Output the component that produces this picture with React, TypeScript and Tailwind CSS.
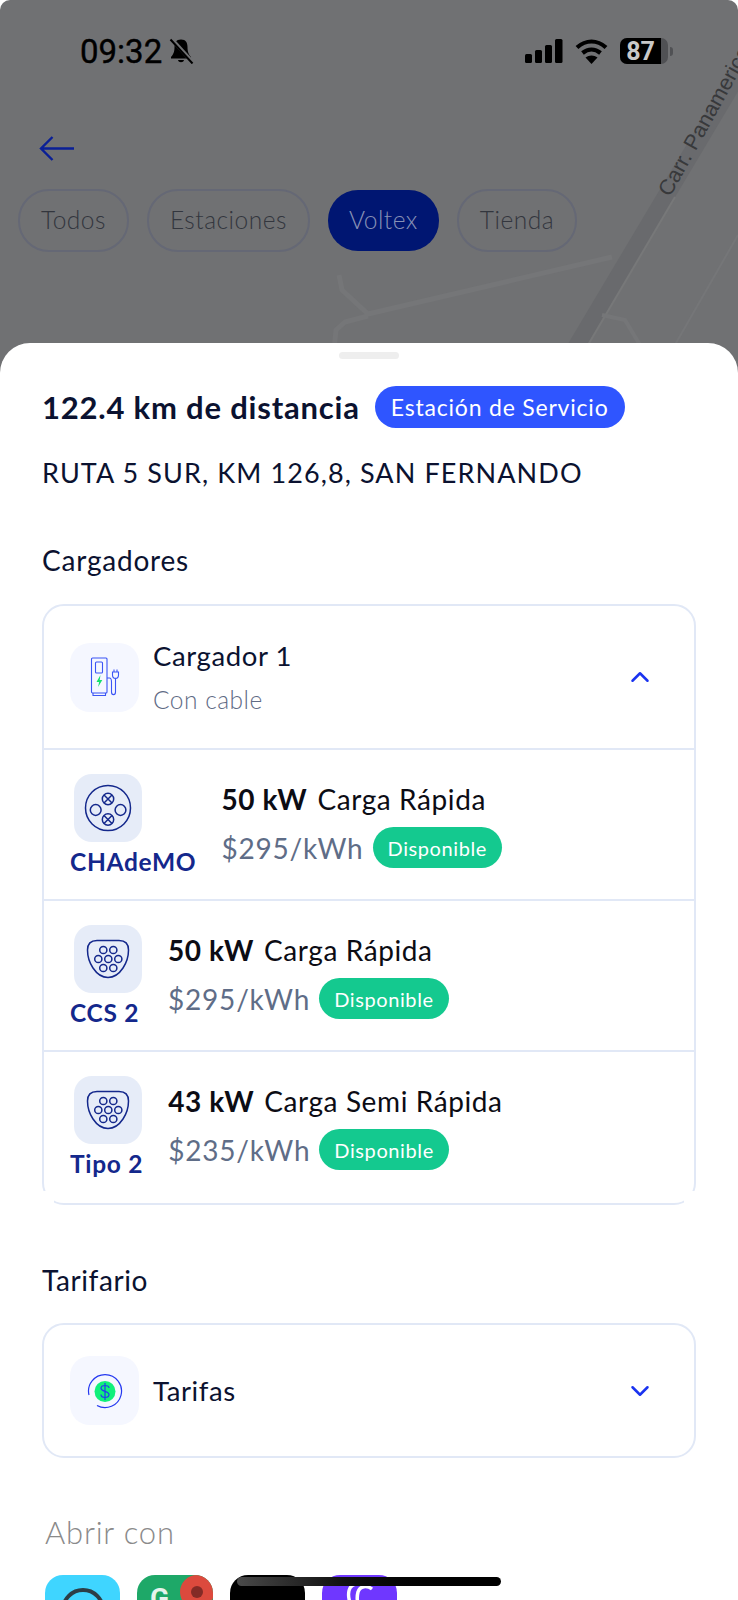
import React from "react";
import { ChevronDown, ChevronUp } from "lucide-react";

const font = "font-['Lato',_'Noto_Sans',_sans-serif]";

const filters = ["Todos", "Estaciones", "Voltex", "Tienda"];

type Plug = "chademo" | "type2";

const chargers: {
  plug: Plug;
  name: string;
  power: string;
  speed: string;
  price: string;
}[] = [
  { plug: "chademo", name: "CHAdeMO", power: "50 kW", speed: "Carga Rápida", price: "$295/kWh" },
  { plug: "type2", name: "CCS 2", power: "50 kW", speed: "Carga Rápida", price: "$295/kWh" },
  { plug: "type2", name: "Tipo 2", power: "43 kW", speed: "Carga Semi Rápida", price: "$235/kWh" },
];

const MapRoads = () => (
  <svg className="absolute left-0 top-0" width="738" height="360" viewBox="0 0 738 360" fill="none">
    <path d="M745 63 L570 357" stroke="#696a6d" strokeWidth="17" />
    <path d="M675 197 L588 345" stroke="#777879" strokeWidth="2" />
    <path d="M738 235 L672 350" stroke="#757678" strokeWidth="2" />
    <path
      d="M612 257 L368 314 L342 290 L339 275 M368 316 L345 322 L336 330 L334 350"
      stroke="#757678"
      strokeWidth="5"
      strokeLinejoin="round"
    />
    <path d="M602 315 L625 320 L640 345" stroke="#757678" strokeWidth="4" />
  </svg>
);

const StatusBar = () => (
  <div className="flex h-[50px] items-center justify-between pl-[80px] pr-[65px]">
    <div className="flex items-center gap-[6px]">
      <span className="font-['Roboto',_sans-serif] text-[33px] leading-none text-black [-webkit-text-stroke:0.4px_#000]">
        09:32
      </span>
      <svg width="26" height="26" viewBox="0 0 26 26" fill="none">
        <path d="M13 1.5 C8 1.5 6.5 5 6.5 9 C6.5 14 5.5 16 3 19 V20.5 H23 V19 C20.5 16 19.5 14 19.5 9 C19.5 5 18 1.5 13 1.5 Z" fill="#000" />
        <path d="M10 22 C10.5 25 15.5 25 16 22 Z" fill="#000" />
        <path d="M3 0.5 L25 24.5" stroke="#707173" strokeWidth="4" />
        <path d="M2.5 1.5 L24.5 25.5" stroke="#000" strokeWidth="2" />
      </svg>
    </div>
    <div className="flex items-center gap-[12px]">
      <svg width="38" height="24" viewBox="0 0 38 24">
        <rect x="0" y="15" width="7" height="9" rx="1.5" fill="#000" />
        <rect x="10" y="11" width="7" height="13" rx="1.5" fill="#000" />
        <rect x="20" y="6" width="7" height="18" rx="1.5" fill="#000" />
        <rect x="30" y="0" width="7.5" height="24" rx="1.5" fill="#000" />
      </svg>
      <svg width="33" height="25" viewBox="0 0 33 25" fill="none">
        <path d="M2 8.5 C11 0.5 22 0.5 31 8.5" stroke="#000" strokeWidth="4.2" />
        <path d="M7.5 14 C13 9.5 20 9.5 25.5 14" stroke="#000" strokeWidth="4.2" />
        <path d="M16.5 25 L10.5 18.5 C14 15.8 19 15.8 22.5 18.5 Z" fill="#000" />
      </svg>
      <div className="flex items-center gap-[2px]">
        <div className="relative flex h-[26px] w-[48px] items-center overflow-hidden rounded-[7px] bg-[#505154]">
          <div className="flex h-full w-[41px] items-center justify-center bg-black font-['Roboto',_sans-serif] text-[25px] font-bold leading-none text-[#c9c9c9]">
            87
          </div>
        </div>
        <div className="h-[9px] w-[3px] rounded-r-full bg-[#505154]" />
      </div>
    </div>
  </div>
);

const FilterChips = () => (
  <div className="mt-[28px] flex items-center gap-[18px] pl-[18px]">
    {filters.map((f) =>
      f === "Voltex" ? (
        <div
          key={f}
          className="flex h-[61px] items-center rounded-[30px] bg-[#001672] px-[21px] text-[24.5px] font-light tracking-[0.5px] text-[#8791b6]"
        >
          {f}
        </div>
      ) : (
        <div
          key={f}
          className="flex h-[63px] items-center rounded-[31px] border-2 border-[#656875] px-[21px] text-[24.5px] font-light tracking-[0.5px] text-[#33363e]"
        >
          {f}
        </div>
      ),
    )}
  </div>
);

const ChargerIcon = () => (
  <svg width="32" height="40" viewBox="-1.5 0 32 40" fill="none" stroke="#3b55f5" strokeWidth="1.1">
    <rect x="1" y="1" width="15.5" height="35" rx="1" />
    <path d="M2.5 36 V38.5 H15 V36" />
    <rect x="5" y="5" width="7" height="11" rx="1" />
    <path d="M16.5 21 H19 C21 21 21 23 21 25 V35 C21 38.5 25 38.5 25 35 V22" />
    <path d="M22 15 H28 V18 C28 22.5 22 22.5 22 18 Z M23.5 15 V12.5 M26.5 15 V12.5" />
    <path d="M10 18 L6 25 H8.6 L7.6 30 L11.8 23 H9.2 Z" fill="#16e06d" stroke="none" />
  </svg>
);

const TarifaIcon = () => (
  <svg width="36" height="36" viewBox="0 0 36 36" fill="none">
    <circle cx="18" cy="18.5" r="10.5" fill="#10f07a" />
    <path d="M2 22 A16.5 16.5 0 1 1 10 32.5" stroke="#2438f0" strokeWidth="1.2" />
    <path
      d="M22 15 C22 13 20 12.5 18 12.5 C15.5 12.5 14 13.6 14 15.3 C14 19 22 17.8 22 21.6 C22 23.5 20.5 24.5 18 24.5 C15.5 24.5 14 23.5 14 21.6 M18 10 V27"
      stroke="#2438f0"
      strokeWidth="1.2"
    />
  </svg>
);

const PlugIcon = ({ plug }: { plug: Plug }) => {
  if (plug === "chademo") {
    return (
      <svg width="48" height="48" viewBox="0 0 48 48" fill="none" stroke="#14288c" strokeWidth="1.5">
        <circle cx="24" cy="24" r="22.5" />
        <circle cx="24" cy="15" r="5.7" />
        <path d="M20 11 L28 19 M28 11 L20 19" />
        <circle cx="24" cy="35.5" r="5.7" />
        <path d="M20 31.5 L28 39.5 M28 31.5 L20 39.5" />
        <circle cx="11.7" cy="26" r="5.4" />
        <circle cx="36.5" cy="26" r="5.4" />
      </svg>
    );
  }
  const pins = [
    [17.3, 11],
    [27.3, 11],
    [12.3, 20],
    [22.3, 20],
    [32.3, 20],
    [17.3, 29],
    [27.3, 29],
  ];
  return (
    <svg width="44" height="40" viewBox="0 0 44 40" fill="none" stroke="#14288c" strokeWidth="1.5">
      <path d="M11 1.5 H33 C39 1.5 42.5 5 42.5 11 C42.5 17 41 23 37 29 C33 35 28 38.5 22 38.5 C16 38.5 11 35 7 29 C3 23 1.5 17 1.5 11 C1.5 5 5 1.5 11 1.5 Z" />
      {pins.map(([cx, cy]) => (
        <circle key={`${cx}-${cy}`} cx={cx} cy={cy} r="3.6" />
      ))}
    </svg>
  );
};

const IconBox = ({ children }: { children: React.ReactNode }) => (
  <div className="flex h-[69px] w-[69px] shrink-0 items-center justify-center rounded-[20px] bg-[#f5f7ff]">
    {children}
  </div>
);

const ChargerRow = ({ item }: { item: (typeof chargers)[number] }) => (
  <div className="flex h-[151px] gap-[25px] border-t-2 border-[#e1e8f6] pl-[26px] pt-[24px]">
    <div className="flex min-w-[73px] flex-col items-start">
      <div className="ml-[4px] flex h-[68px] w-[68px] items-center justify-center rounded-[18px] bg-[#e6ecf8]">
        <PlugIcon plug={item.plug} />
      </div>
      <span className="mt-[5px] text-[24.5px] font-bold leading-[30px] tracking-[0.7px] text-[#14288c]">
        {item.name}
      </span>
    </div>
    <div className="flex flex-col pt-[11px]">
      <div className="flex h-[28px] items-center gap-[10px] text-[28px] leading-none tracking-[0.6px] text-[#0c0c14]">
        <b className="font-bold">{item.power}</b>
        <span>{item.speed}</span>
      </div>
      <div className="mt-[14px] flex items-center gap-[9px]">
        <span className="text-[28px] leading-none tracking-[0.8px] text-[#5f6d87]">{item.price}</span>
        <span className="flex h-[41px] items-center rounded-[21px] bg-[#14c98f] px-[15px] text-[20px] tracking-[0.6px] text-white">
          Disponible
        </span>
      </div>
    </div>
  </div>
);

const AppTiles = () => (
  <div className="mt-[25px] flex gap-[17px] pl-[3px]">
    <div className="flex h-[76px] w-[75px] justify-center rounded-[18px] bg-[#3fd5ff] pt-[13px]">
      <div className="h-[44px] w-[44px] rounded-full border-[4px] border-[#2c3e46]" />
    </div>
    <div className="relative h-[76px] w-[76px] overflow-hidden rounded-[18px] bg-[#1ea868]">
      <span className="absolute left-[13px] top-[10px] font-['Roboto',_sans-serif] text-[28px] font-bold leading-none text-[#e6f3ec]">
        G
      </span>
      <div className="absolute left-[43px] top-0 flex h-[34px] w-[34px] items-center justify-center rounded-full bg-[#dc4a3d]">
        <div className="h-[12px] w-[12px] rounded-full bg-[#842b26]" />
      </div>
    </div>
    <div className="h-[76px] w-[75px] rounded-[18px] bg-black" />
    <div className="flex h-[76px] w-[75px] justify-center rounded-[18px] bg-[#6f37ff] pt-[8px]">
      <svg width="30" height="20" viewBox="0 0 30 20" fill="none" stroke="#fff" strokeWidth="3.5">
        <path d="M5 20 C2 10 4 3 10 1" />
        <path d="M27 6 C22 2 15 3 13 9 C12 13 12 17 13 20" />
      </svg>
    </div>
  </div>
);

export default function App() {
  return (
    <div className={`relative h-[1600px] w-[738px] overflow-hidden bg-white ${font}`}>
      <div className="relative h-[400px] overflow-hidden rounded-t-[10px] bg-[#707173] pt-[26px]">
        <MapRoads />
        <span className="absolute left-[615px] top-[95px] w-[190px] -rotate-[61deg] whitespace-nowrap font-['Liberation_Sans',_sans-serif] text-[21.5px] text-[#38393b]">
          Carr. Panamericana
        </span>
        <div className="relative">
          <StatusBar />
          <svg width="36" height="25" viewBox="0 0 36 25" fill="none" stroke="#0a1f96" strokeWidth="2.4" className="ml-[39px] mt-[60px]">
            <path d="M2 12.5 H35 M13.5 1 L2 12.5 L13.5 24" />
          </svg>
          <FilterChips />
        </div>
      </div>

      <div className="absolute inset-x-0 top-[343px] h-[1257px] overflow-hidden rounded-t-[30px] bg-white px-[42px]">
        <div className="mx-auto mt-[9px] h-[7px] w-[60px] rounded-full bg-[#eeeeee]" />

        <div className="mt-[27px] flex items-center gap-[15px]">
          <h1 className="text-[31px] font-bold leading-none tracking-[0.8px] text-[#0b1230]">122.4 km de distancia</h1>
          <span className="flex h-[42px] items-center rounded-[21px] bg-[#2f55ff] px-[16px] text-[23px] tracking-[0.8px] text-white">
            Estación de Servicio
          </span>
        </div>
        <p className="mt-[27px] text-[27px] leading-[36px] tracking-[1.1px] text-[#0b1230]">
          RUTA 5 SUR, KM 126,8, SAN FERNANDO
        </p>

        <h2 className="mt-[51px] text-[28px] leading-[36px] tracking-[0.8px] text-[#0b1230]">Cargadores</h2>

        <div className="relative mt-[26px] rounded-[22px] border-2 border-[#e1e8f6]">
          <div className="flex h-[142px] items-center pl-[26px] pr-[39px]">
            <IconBox>
              <ChargerIcon />
            </IconBox>
            <div className="ml-[14px] flex flex-1 flex-col">
              <span className="text-[27.5px] leading-[30px] tracking-[0.6px] text-[#0b1230]">Cargador 1</span>
              <span className="mt-[16px] text-[24.5px] font-light leading-[26px] tracking-[0.5px] text-[#5f6b85]">Con cable</span>
            </div>
            <ChevronUp size={30} strokeWidth={2} className="text-[#1a33f0]" />
          </div>
          <div className="pb-[2px]">
            {chargers.map((c) => (
              <ChargerRow key={c.name} item={c} />
            ))}
          </div>
          <div className="absolute -bottom-[2px] -left-[2px] h-[14px] w-[12px] bg-white" />
          <div className="absolute -bottom-[2px] -right-[2px] h-[14px] w-[12px] bg-white" />
        </div>

        <h2 className="mt-[57px] text-[28px] leading-[36px] tracking-[0.6px] text-[#0b1230]">Tarifario</h2>

        <div className="mt-[25px] flex h-[135px] items-center rounded-[22px] border-2 border-[#e1e8f6] pl-[26px] pr-[39px]">
          <IconBox>
            <TarifaIcon />
          </IconBox>
          <span className="ml-[14px] flex-1 text-[27.5px] tracking-[0.6px] text-[#0b1230]">Tarifas</span>
          <ChevronDown size={30} strokeWidth={2} className="text-[#1a33f0]" />
        </div>

        <h2 className="mt-[56px] pl-[3px] text-[31px] font-light leading-[36px] tracking-[0.8px] text-[#8a8a8a]">
          Abrir con
        </h2>
        <AppTiles />
      </div>

      {/* home indicator */}
      <div className="absolute left-[237px] top-[1577px] h-[9px] w-[264px] rounded-full bg-gradient-to-r from-[#4a4a4a] via-[#111] via-40% to-black" />
    </div>
  );
}
